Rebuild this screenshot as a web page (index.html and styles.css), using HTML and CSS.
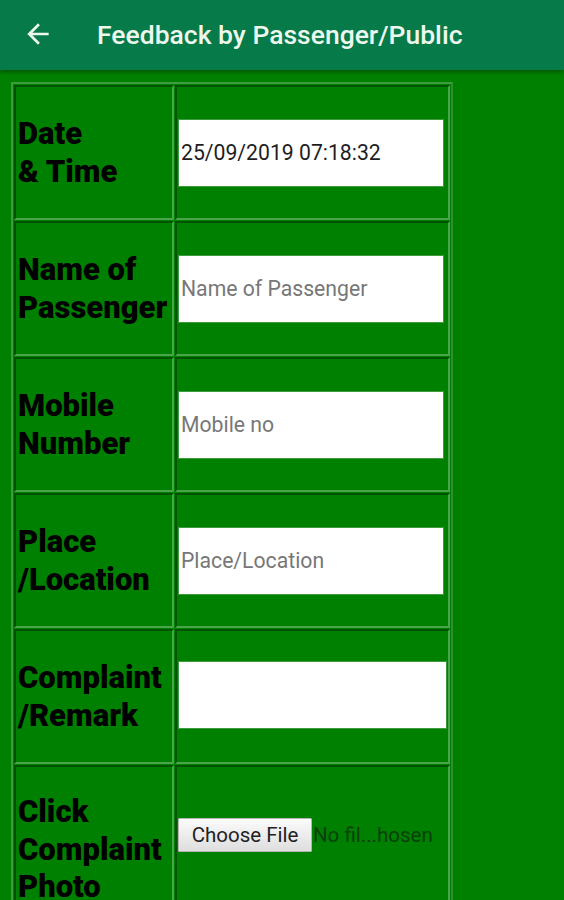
FILE: index.html
```html
<!DOCTYPE html>
<html lang="en">

<head>
    <meta charset="UTF-8">
    <meta name="viewport" content="width=device-width, initial-scale=1.0">
    <title>Feedback by Passenger/Public</title>
    <link rel="stylesheet" href="styles.css">
</head>

<body>

    <div class="toolbar">
        <span class="backArrow">
            <svg width="32" height="32" viewBox="0 0 24 24">
                <path d="M20 11H7.83l5.59-5.59L12 4l-8 8 8 8 1.41-1.41L7.83 13H20v-2z" fill="#eef7ee" />
            </svg>
        </span>
        <span class="toolbarTitle">Feedback by Passenger/Public</span>
    </div>

    <table class="feedbackTable">
        <tr>
            <td class="label">Date<br>&amp; Time</td>
            <td class="field"><input type="text" class="textBox" value="25/09/2019 07:18:32"></td>
        </tr>
        <tr>
            <td class="label">Name of<br>Passenger</td>
            <td class="field"><input type="text" class="textBox" placeholder="Name of Passenger"></td>
        </tr>
        <tr>
            <td class="label">Mobile<br>Number</td>
            <td class="field"><input type="text" class="textBox" placeholder="Mobile no"></td>
        </tr>
        <tr>
            <td class="label">Place<br>/Location</td>
            <td class="field"><input type="text" class="textBox" placeholder="Place/Location"></td>
        </tr>
        <tr>
            <td class="label">Complaint<br>/Remark</td>
            <td class="field"><textarea class="remarkBox"></textarea></td>
        </tr>
        <tr class="photoRow">
            <td class="label">Click<br>Complaint<br>Photo</td>
            <td class="field">
                <div class="filePicker">
                    <button class="fileButton">Choose File</button>
                    <span class="fileName">No fil...hosen</span>
                </div>
            </td>
        </tr>
    </table>

</body>

</html>
```

FILE: styles.css
```css
body,
html {
    margin: 0;
    padding: 0;
}

body {
    font-family: Roboto, "Liberation Sans", sans-serif;
    background-color: #008000;
    overflow: hidden;
}

.toolbar {
    height: 70px;
    display: flex;
    align-items: center;
    background-color: #067a48;
    box-shadow: 0 2px 4px rgba(0, 0, 0, 0.35);
    color: #eef7ee;
}

.backArrow {
    width: 32px;
    height: 32px;
    margin-left: 22px;
    margin-right: 43px;
    margin-top: -2px;
}

.toolbarTitle {
    font-size: 26.5px;
    font-weight: 500;
    margin-top: -1px;
}

.feedbackTable {
    margin: 12px 0 0 11px;
    width: 442px;
    table-layout: fixed;
    border-collapse: separate;
    border-spacing: 1px;
    border: 2px solid #3f9b3f;
    border-right-color: #2f8f2f;
    border-bottom-color: #2f8f2f;
}

.feedbackTable td {
    border: 2px solid #4aa44a;
    border-top-color: #005400;
    border-left-color: #005400;
    height: 131px;
    padding: 0;
    vertical-align: middle;
}

.label {
    width: 154px;
    padding-left: 2px !important;
    font-size: 31px;
    font-weight: 900;
    line-height: 37.5px;
    color: #000;
    white-space: nowrap;
}

.field {
    padding-left: 1px !important;
}

.textBox {
    display: block;
    box-sizing: border-box;
    width: 266px;
    height: 68px;
    margin: 0;
    padding: 0 2px;
    border: 1px solid #3e9a3e;
    background-color: #fff;
    font-family: Roboto, "Liberation Sans", sans-serif;
    font-size: 21.2px;
    color: #1e1e1e;
    outline: none;
}

.textBox::placeholder {
    color: #777;
}

.remarkBox {
    display: block;
    box-sizing: border-box;
    width: 269px;
    height: 68px;
    margin: 0 0 4px 0;
    border: 1px solid #3e9a3e;
    background-color: #fff;
    resize: none;
    outline: none;
}

.photoRow td {
    height: auto;
    padding-top: 26px;
    padding-bottom: 28px;
}

.photoRow .field {
    padding-bottom: 56px;
}

.filePicker {
    display: flex;
    align-items: center;
}

.fileButton {
    height: 34px;
    width: 134px;
    padding: 0;
    font-family: Roboto, "Liberation Sans", sans-serif;
    font-size: 20.5px;
    color: #222;
    border: 1px solid #b4b4b4;
    border-radius: 1px;
    background: linear-gradient(#fbfbfb, #dedede);
}

.fileName {
    font-size: 20.5px;
    color: #0a3f0a;
    margin-left: 1px;
}
```
